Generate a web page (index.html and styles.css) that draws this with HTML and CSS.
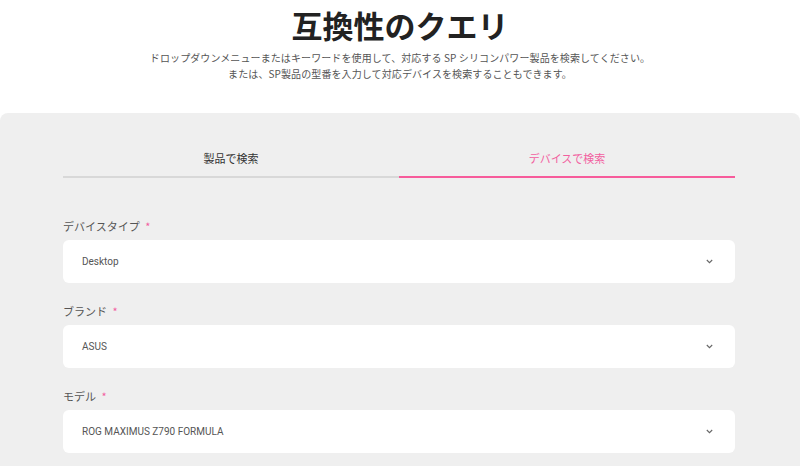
FILE: index.html
```html
<!DOCTYPE html>
<html lang="ja">
<head>
<meta charset="utf-8">
<link rel="stylesheet" href="styles.css">
</head>
<body>
<header class="head">
  <h1 class="title">互換性のクエリ</h1>
  <p class="sub">ドロップダウンメニューまたはキーワードを使用して、対応する SP シリコンパワー製品を検索してください。<br>または、SP製品の型番を入力して対応デバイスを検索することもできます。</p>
</header>
<main class="panel">
  <div class="tabs">
    <div class="tab">製品で検索</div>
    <div class="tab active">デバイスで検索</div>
  </div>
  <div class="field first">
    <div class="label">デバイスタイプ <span class="req">*</span></div>
    <div class="select"><span>Desktop</span><svg class="chev" width="7" height="5" viewBox="0 0 7 5"><path d="M0.8 1 L3.5 3.7 L6.2 1" fill="none" stroke="#666" stroke-width="1.1"/></svg></div>
  </div>
  <div class="field">
    <div class="label">ブランド <span class="req">*</span></div>
    <div class="select"><span>ASUS</span><svg class="chev" width="7" height="5" viewBox="0 0 7 5"><path d="M0.8 1 L3.5 3.7 L6.2 1" fill="none" stroke="#666" stroke-width="1.1"/></svg></div>
  </div>
  <div class="field">
    <div class="label">モデル <span class="req">*</span></div>
    <div class="select"><span>ROG MAXIMUS Z790 FORMULA</span><svg class="chev" width="7" height="5" viewBox="0 0 7 5"><path d="M0.8 1 L3.5 3.7 L6.2 1" fill="none" stroke="#666" stroke-width="1.1"/></svg></div>
  </div>
</main>
</body>
</html>
```
FILE: styles.css
```css
html, body {
  margin: 0;
  padding: 0;
  background: #fff;
  font-family: "Noto Sans", "Noto Sans CJK JP", sans-serif;
  color: #333;
}
.head {
  padding-top: 3px;
  padding-bottom: 31px;
  text-align: center;
}
.title {
  margin: 0;
  font-size: 31px;
  line-height: 44px;
  font-weight: 700;
  color: #222;
  font-family: "Noto Sans CJK JP", sans-serif;
}
.sub {
  margin: 3px 0 0;
  font-size: 10px;
  line-height: 16px;
  letter-spacing: 0.1px;
  color: #555;
  font-family: "Noto Sans CJK JP", sans-serif;
}
.panel {
  background: #efefef;
  border-radius: 8px 8px 0 0;
  padding: 35px 65px 13px 63px;
}
.tabs {
  display: flex;
}
.tab {
  flex: 1;
  text-align: center;
  font-size: 11px;
  line-height: 20px;
  padding-bottom: 8px;
  border-bottom: 2px solid #d8d8d8;
  color: #333;
  font-family: "Noto Sans CJK JP", sans-serif;
}
.tab.active {
  color: #f2609f;
  border-bottom-color: #f75b9b;
}
.field {
  margin-top: 18px;
}
.field.first {
  margin-top: 38px;
}
.label {
  font-size: 11px;
  line-height: 20px;
  color: #555;
  margin-bottom: 4px;
  font-family: "Noto Sans CJK JP", sans-serif;
}
.req {
  color: #f2609f;
  margin-left: 3px;
}
.select {
  background: #fff;
  border-radius: 6px;
  height: 43px;
  display: flex;
  align-items: center;
  justify-content: space-between;
  padding: 0 22px 0 19px;
  font-size: 10px;
  color: #555;
  font-family: "Roboto", "Noto Sans", sans-serif;
}
.chev {
  display: block;
}
```
